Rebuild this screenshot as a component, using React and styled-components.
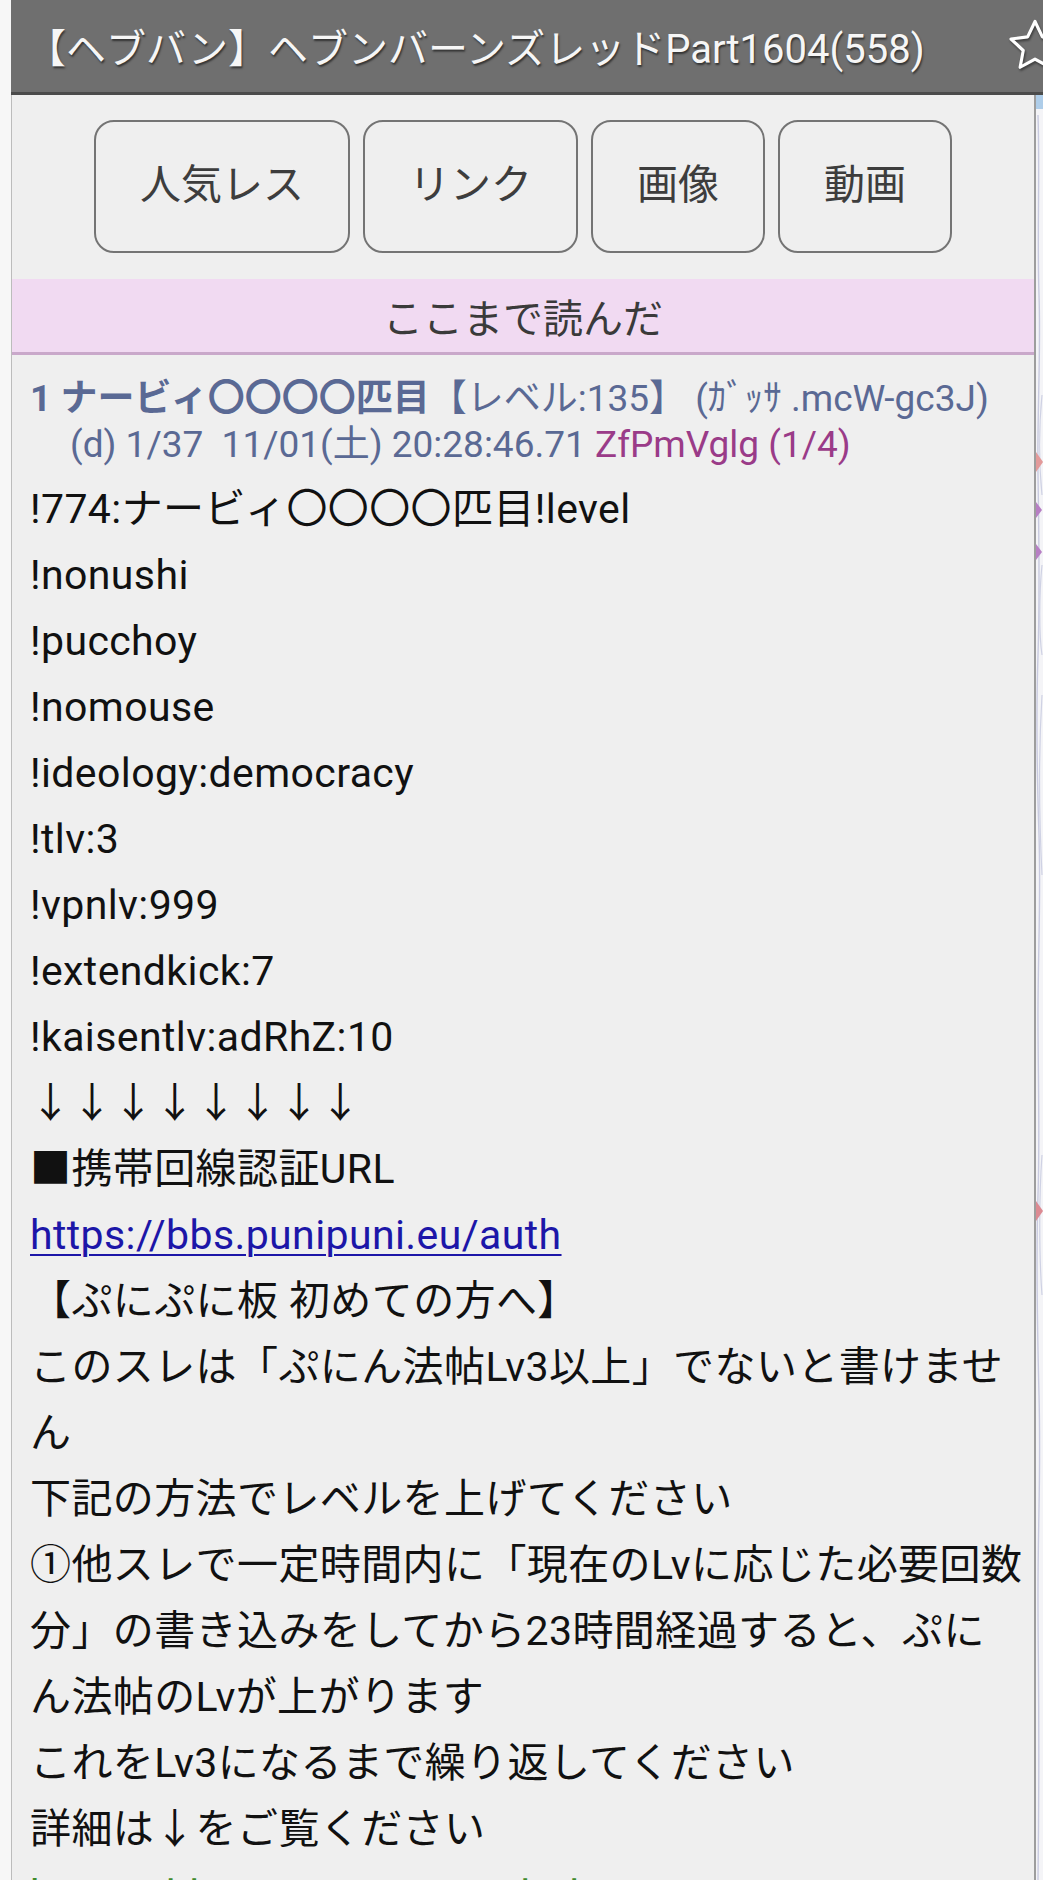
import React from "react";
import styled, { createGlobalStyle } from "styled-components";

const GlobalStyle = createGlobalStyle`
  html, body {
    margin: 0;
    padding: 0;
    background: #f7f7f7;
  }
  body {
    font-family: Roboto, "Noto Sans CJK JP", sans-serif;
  }
`;

const FONT = `Roboto, "Noto Sans CJK JP", sans-serif`;

const Page = styled.div`
  display: flex;
  min-height: 1880px;
  padding-left: 11px;
  background: #f7f7f7;
`;

const Main = styled.div`
  flex: 1;
  min-width: 0;
  display: flex;
  flex-direction: column;
  overflow: hidden;
`;

const Header = styled.header`
  height: 92px;
  background: #6f6f6f;
  border-bottom: 3px solid #4b4b4b;
  display: flex;
  align-items: center;
  padding-left: 15px;
  overflow: hidden;
`;

const Title = styled.h1`
  margin: 0;
  font-family: ${FONT};
  font-size: 40px;
  font-weight: 400;
  color: #f6f6f6;
  white-space: nowrap;
  text-shadow: 1px 2px 2px rgba(0, 0, 0, 0.55);
`;

const StarButton = styled.span`
  margin-left: auto;
  margin-right: -22px;
  display: flex;
  flex-shrink: 0;
  filter: drop-shadow(1px 2px 1px rgba(0, 0, 0, 0.45));
`;

const Content = styled.div`
  flex: 1;
  display: flex;
`;

const Panel = styled.main`
  flex: 1;
  min-width: 0;
  background: #efefef;
  border-left: 1px solid #bcbcbc;
  border-right: 2px solid #9d9d9d;
`;

const SideStrip = styled.aside`
  width: 7px;
  flex-shrink: 0;
  background: #f4f4f7;
  overflow: hidden;
`;

const Toolbar = styled.nav`
  display: flex;
  justify-content: center;
  gap: 13px;
  padding-top: 25px;
`;

const ToolButton = styled.button`
  height: 133px;
  padding: 0 44px 3px;
  border: 2px solid #747474;
  border-radius: 20px;
  background: transparent;
  font-family: ${FONT};
  font-size: 41px;
  line-height: 1;
  color: #3d3d3d;
  cursor: pointer;
`;

const ReadMarker = styled.div`
  margin-top: 26px;
  height: 73px;
  background: #f1daf2;
  border-bottom: 3px solid #c9a8ca;
  display: flex;
  align-items: center;
  justify-content: center;
  font-size: 40px;
  color: #3a3a3a;
`;

const Post = styled.article`
  padding: 21px 4px 0 18px;
`;

const PostMeta = styled.div`
  font-size: 37px;
  line-height: 46px;
  color: #5a6994;
  white-space: nowrap;
`;

const MetaLine = styled.div`
  padding-left: ${(p) => (p.$indent ? "40px" : "0")};
`;

const Name = styled.b`
  font-weight: 700;
`;

const PosterId = styled.span`
  color: #9a3b88;
`;

const PostBody = styled.div`
  margin-top: 8px;
  font-size: 41px;
  line-height: 66px;
  letter-spacing: 0.4px;
  color: #111;
`;

const Line = styled.div`
  white-space: nowrap;
`;

const BlueLink = styled.a`
  color: #1c16a8;
  text-decoration: underline;
  text-decoration-thickness: 2px;
  text-underline-offset: 5px;
`;

const GreenLink = styled.a`
  color: #3f8a2c;
  text-decoration: none;
`;

function Star() {
  return (
    <svg width="60" height="60" viewBox="0 0 24 24" fill="none">
      <polygon
        points="12,2.2 14.95,8.35 21.6,9.2 16.7,13.8 17.95,20.5 12,17.25 6.05,20.5 7.3,13.8 2.4,9.2 9.05,8.35"
        stroke="#ffffff"
        strokeWidth="1.25"
        strokeLinejoin="round"
      />
    </svg>
  );
}

function StripDecoration() {
  return (
    <svg width="7" height="1785" viewBox="0 0 7 1785" style={{ display: "block" }}>
      <rect x="0" y="0" width="7" height="14" fill="#7fb2e0" opacity="0.6" />
      <path
        d="M2 20 C4 80 1 140 3 200 S1 320 2 380 S4 500 2 560 S1 680 3 740 S2 860 2 920 S4 1040 2 1100 S1 1220 3 1300 S2 1420 2 1500 S4 1620 2 1785"
        stroke="#c9cbe0"
        strokeWidth="1.4"
        fill="none"
      />
      <path
        d="M6 300 C3 330 3 370 6 400 M6 470 C3 500 3 540 6 560 M6 600 C3 650 3 720 6 780 M6 1060 C3 1100 3 1160 6 1200"
        stroke="#cfd2e4"
        strokeWidth="1.2"
        fill="none"
      />
      <polygon points="0,357 7,367 0,377" fill="#e39a9a" />
      <polygon points="0,407 6,415 0,423" fill="#b77fc4" />
      <polygon points="0,449 6,457 0,465" fill="#b77fc4" />
      <polygon points="0,1106 7,1116 0,1126" fill="#dc8a92" />
    </svg>
  );
}

const bodyLines = [
  "!774:ナービィ〇〇〇〇匹目!level",
  "!nonushi",
  "!pucchoy",
  "!nomouse",
  "!ideology:democracy",
  "!tlv:3",
  "!vpnlv:999",
  "!extendkick:7",
  "!kaisentlv:adRhZ:10",
  "↓↓↓↓↓↓↓↓",
  "■携帯回線認証URL",
];

export default function App() {
  return (
    <>
      <GlobalStyle />
      <Page>
        <Main>
          <Header>
            <Title>【ヘブバン】ヘブンバーンズレッドPart1604(558)</Title>
            <StarButton>
              <Star />
            </StarButton>
          </Header>
          <Content>
            <Panel>
              <Toolbar>
                <ToolButton>人気レス</ToolButton>
                <ToolButton>リンク</ToolButton>
                <ToolButton>画像</ToolButton>
                <ToolButton>動画</ToolButton>
              </Toolbar>
              <ReadMarker>ここまで読んだ</ReadMarker>
              <Post>
                <PostMeta>
                  <MetaLine>
                    <Name>1 ナービィ〇〇〇〇匹目</Name>【レベル:135】 (ｶﾞｯｻ .mcW-gc3J)
                  </MetaLine>
                  <MetaLine $indent>
                    (d) 1/37&nbsp; 11/01(土) 20:28:46.71 <PosterId>ZfPmVglg (1/4)</PosterId>
                  </MetaLine>
                </PostMeta>
                <PostBody>
                  {bodyLines.map((t, i) => (
                    <Line key={i}>{t}</Line>
                  ))}
                  <Line>
                    <BlueLink href="#auth">https://bbs.punipuni.eu/auth</BlueLink>
                  </Line>
                  <Line>【ぷにぷに板 初めての方へ】</Line>
                  <Line>
                    このスレは「ぷにん法帖Lv3以上」でないと書けませ
                    <br />ん
                  </Line>
                  <Line>下記の方法でレベルを上げてください</Line>
                  <Line>
                    ①他スレで一定時間内に「現在のLvに応じた必要回数
                    <br />
                    分」の書き込みをしてから23時間経過すると、ぷに
                    <br />
                    ん法帖のLvが上がります
                  </Line>
                  <Line>これをLv3になるまで繰り返してください</Line>
                  <Line>詳細は↓をご覧ください</Line>
                  <Line>
                    <GreenLink href="#wiki">https://bbs.punipuni.eu/wiki/beginner</GreenLink>
                  </Line>
                </PostBody>
              </Post>
            </Panel>
            <SideStrip>
              <StripDecoration />
            </SideStrip>
          </Content>
        </Main>
      </Page>
    </>
  );
}
